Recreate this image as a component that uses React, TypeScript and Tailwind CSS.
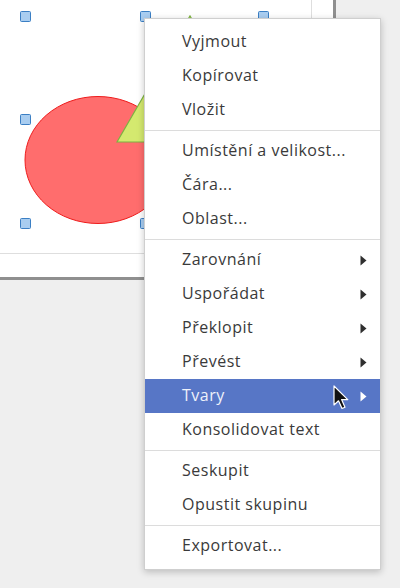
import { Fragment } from 'react';

type Item = { label: string; sub?: boolean; active?: boolean } | 'sep';

const ITEMS: Item[] = [
  { label: 'Vyjmout' },
  { label: 'Kopírovat' },
  { label: 'Vložit' },
  'sep',
  { label: 'Umístění a velikost...' },
  { label: 'Čára...' },
  { label: 'Oblast...' },
  'sep',
  { label: 'Zarovnání', sub: true },
  { label: 'Uspořádat', sub: true },
  { label: 'Překlopit', sub: true },
  { label: 'Převést', sub: true },
  { label: 'Tvary', sub: true, active: true },
  { label: 'Konsolidovat text' },
  'sep',
  { label: 'Seskupit' },
  { label: 'Opustit skupinu' },
  'sep',
  { label: 'Exportovat...' },
];

function Handle({ x, y }: { x: number; y: number }) {
  return <rect x={x + 0.5} y={y + 0.5} width={10} height={10} rx={1} fill="#a9cdf0" stroke="#3b7fc4" strokeWidth={1} />;
}

function Drawing() {
  return (
    <svg className="absolute left-0 top-0" width={335} height={278} viewBox="0 0 335 278">
      <ellipse cx={98} cy={160} rx={73} ry={63.5} fill="#ff6d6d" stroke="#ee1c1c" strokeWidth={1} />
      <polygon points="117,142 190,16 262,142" fill="#d4e96f" stroke="#7cb342" strokeWidth={1.2} />
      <Handle x={20} y={11} />
      <Handle x={140} y={11} />
      <Handle x={258} y={11} />
      <Handle x={20} y={114} />
      <Handle x={20} y={218} />
      <Handle x={140} y={218} />
    </svg>
  );
}

function Arrow({ light }: { light?: boolean }) {
  return (
    <svg width={7} height={11} viewBox="0 0 7 11">
      <polygon points="0.5,0.5 6.5,5.5 0.5,10.5" fill={light ? '#ffffff' : '#2f2f2f'} />
    </svg>
  );
}

function Cursor() {
  return (
    <svg className="absolute left-[333px] top-[385px]" width={17} height={26} viewBox="0 0 17 26">
      <path
        d="M1 1 L1 20 L5.5 15.8 L9 23.5 L12 22.2 L8.6 14.6 L14.8 14.6 Z"
        fill="#111"
        stroke="#fff"
        strokeWidth={1.2}
        strokeLinejoin="round"
      />
    </svg>
  );
}

export default function App() {
  return (
    <div
      className="relative h-[588px] w-[400px] overflow-hidden bg-[#efefef]"
      style={{ fontFamily: '"Open Sans", "Noto Sans", "DejaVu Sans", sans-serif' }}
    >
      <div className="relative h-[280px] w-[336px] border-b-[3px] border-r-[3px] border-[#8f8f8f] bg-white">
        <div className="h-[254px] w-[312px] border-b border-r border-[#dedede]" />
        <Drawing />
      </div>

      <div className="absolute left-[144px] top-[18px] w-[237px] border border-[#cfcfcf] bg-white py-[6px] shadow-[0_2px_7px_rgba(0,0,0,0.22)]">
        {ITEMS.map((it, i) =>
          it === 'sep' ? (
            <div key={i} className="flex h-[7px] items-center">
              <div className="h-px w-full bg-[#dcdcdc]" />
            </div>
          ) : (
            <Fragment key={i}>
              <div
                className={`flex h-[34px] items-center justify-between pl-[37px] pr-[13px] text-[16px] tracking-[0.5px] ${
                  it.active ? 'bg-[#5776c6] text-[#eef1fa]' : 'text-[#3a3a3a]'
                }`}
              >
                <span className="-translate-y-px">{it.label}</span>
                {it.sub && <Arrow light={it.active} />}
              </div>
            </Fragment>
          ),
        )}
      </div>

      <Cursor />
    </div>
  );
}
